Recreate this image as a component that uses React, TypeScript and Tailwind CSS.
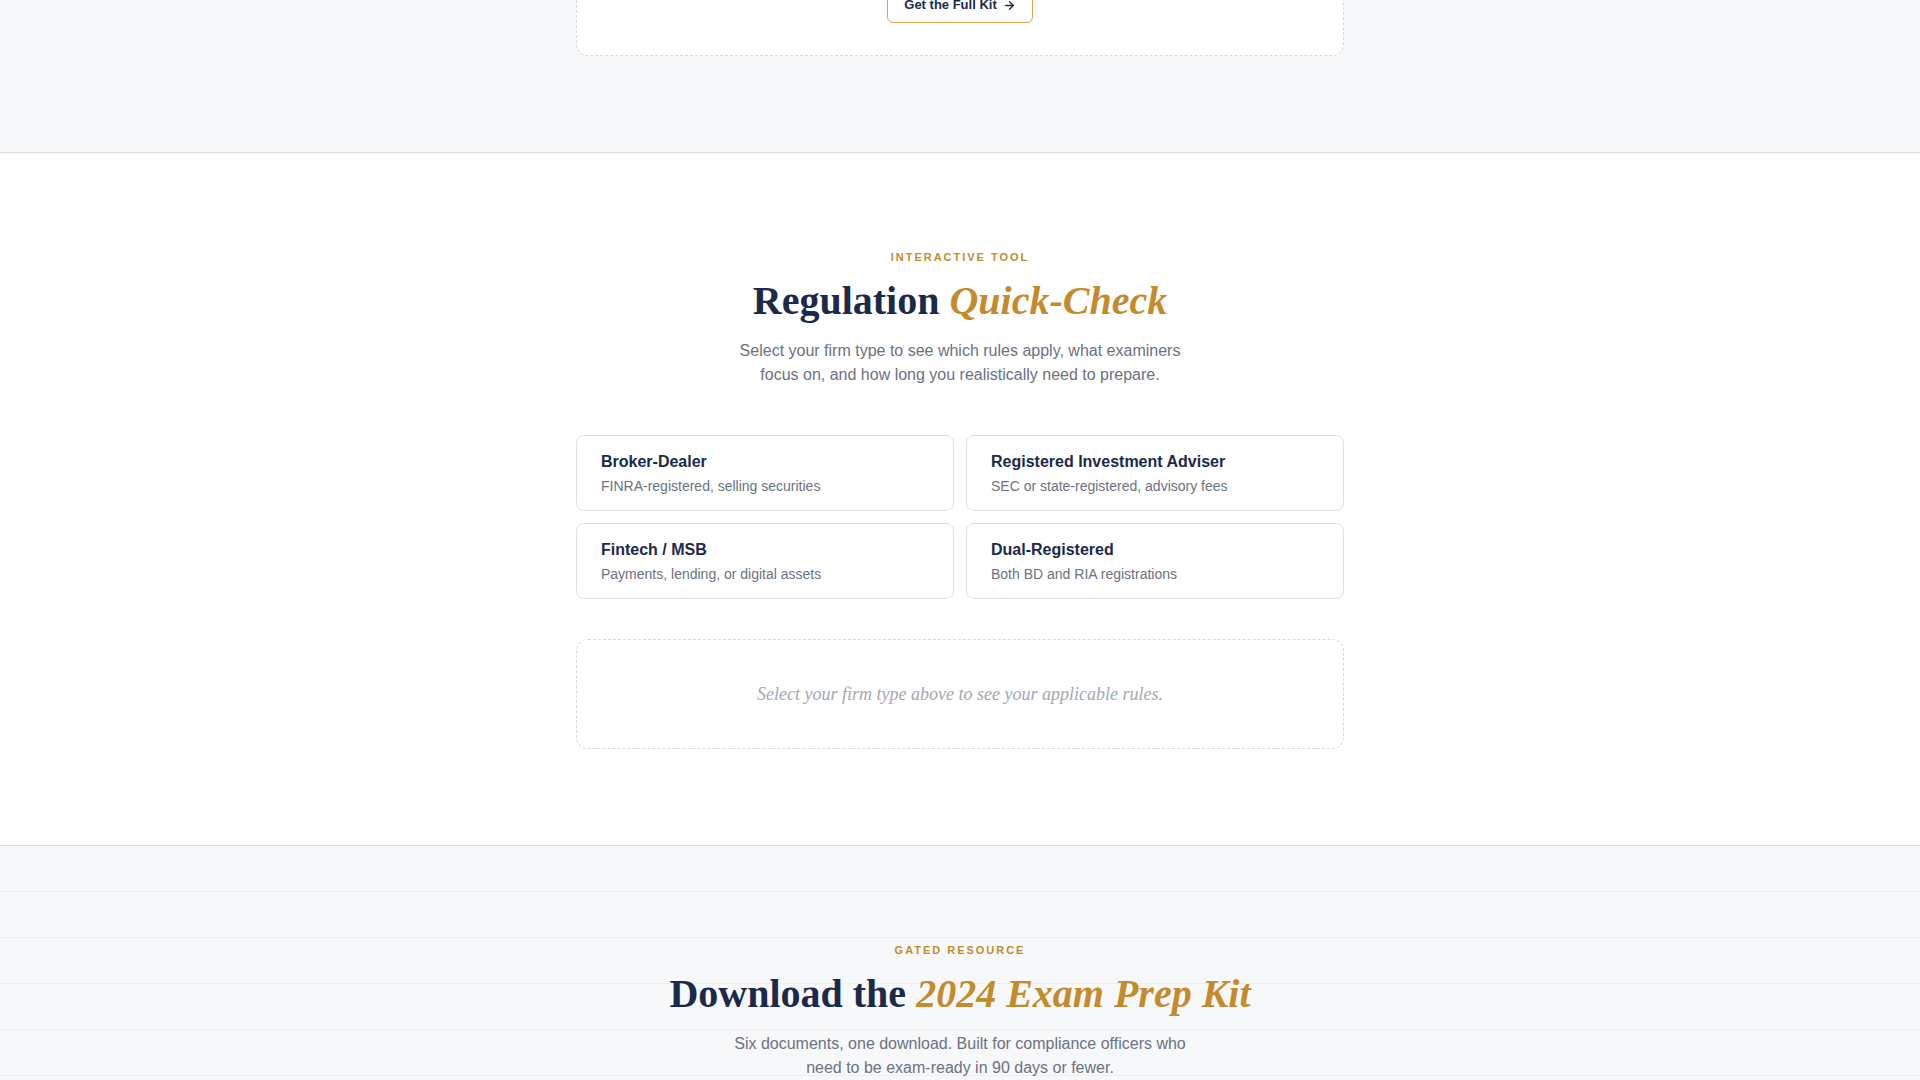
import { ArrowRight } from "lucide-react";

const firmTypes = [
  { title: "Broker-Dealer", desc: "FINRA-registered, selling securities" },
  { title: "Registered Investment Adviser", desc: "SEC or state-registered, advisory fees" },
  { title: "Fintech / MSB", desc: "Payments, lending, or digital assets" },
  { title: "Dual-Registered", desc: "Both BD and RIA registrations" },
];

function Eyebrow({ children }: { children: React.ReactNode }) {
  return (
    <p className="text-[11px] leading-4 font-bold tracking-[0.18em] uppercase text-[#c48b2c]">{children}</p>
  );
}

export default function App() {
  return (
    <div className="min-h-screen bg-white text-[#1b2a4a] font-['Liberation_Sans',Arial,sans-serif] overflow-hidden">
      {/* Tail of the previous section */}
      <section className="bg-[#f7f8fa] pb-24 border-b border-[#d9dce1]">
        <div className="max-w-3xl mx-auto -mt-[46px] bg-white border border-dashed border-[#d6d9de] rounded-xl pt-8 pb-8 flex justify-center">
          <button className="flex items-center gap-1.5 px-4 h-9 bg-white border border-[#d4a54c] rounded-md text-[13px] font-bold text-[#1b2a4a]">
            Get the Full Kit
            <ArrowRight size={13} strokeWidth={2.5} />
          </button>
        </div>
      </section>

      {/* Regulation Quick-Check */}
      <section className="bg-white py-24">
        <div className="max-w-3xl mx-auto">
          <div className="text-center">
            <Eyebrow>Interactive Tool</Eyebrow>
            <h2 className="mt-3 text-[40px] leading-[48px] font-bold font-['Liberation_Serif','Times_New_Roman',serif] text-[#1b2a4a]">
              Regulation <em className="text-[#c48b2c]">Quick-Check</em>
            </h2>
            <p className="mt-3.5 max-w-[480px] mx-auto text-base leading-6 text-[#6b7280]">
              Select your firm type to see which rules apply, what examiners focus on, and how long you realistically need to prepare.
            </p>
          </div>

          <div className="mt-12 grid grid-cols-2 gap-3">
            {firmTypes.map((f) => (
              <button
                key={f.title}
                className="text-left bg-white border border-[#dcdfe4] rounded-lg px-6 py-3.5"
              >
                <div className="text-base leading-6 font-bold text-[#1b2a4a]">{f.title}</div>
                <div className="mt-0.5 text-sm leading-5 text-[#6b7280]">{f.desc}</div>
              </button>
            ))}
          </div>

          <div className="mt-10 border border-dashed border-[#d6d9de] rounded-xl py-10 text-center">
            <p className="text-lg leading-7 italic font-['Liberation_Serif','Times_New_Roman',serif] text-[#a3a8b1]">
              Select your firm type above to see your applicable rules.
            </p>
          </div>
        </div>
      </section>

      {/* Gated resource */}
      <section className="border-t border-[#d9dce1] bg-[#f7f8fa] bg-[linear-gradient(to_bottom,transparent_45px,#eceef1_45px)] bg-[size:100%_46px] py-24">
        <div className="max-w-3xl mx-auto text-center">
          <Eyebrow>Gated Resource</Eyebrow>
          <h2 className="mt-3 text-[40px] leading-[48px] font-bold font-['Liberation_Serif','Times_New_Roman',serif] text-[#1b2a4a]">
            Download the <em className="text-[#c48b2c]">2024 Exam Prep Kit</em>
          </h2>
          <p className="mt-3.5 max-w-[480px] mx-auto text-base leading-6 text-[#6b7280]">
            Six documents, one download. Built for compliance officers who need to be exam-ready in 90 days or fewer.
          </p>
        </div>
      </section>
    </div>
  );
}
